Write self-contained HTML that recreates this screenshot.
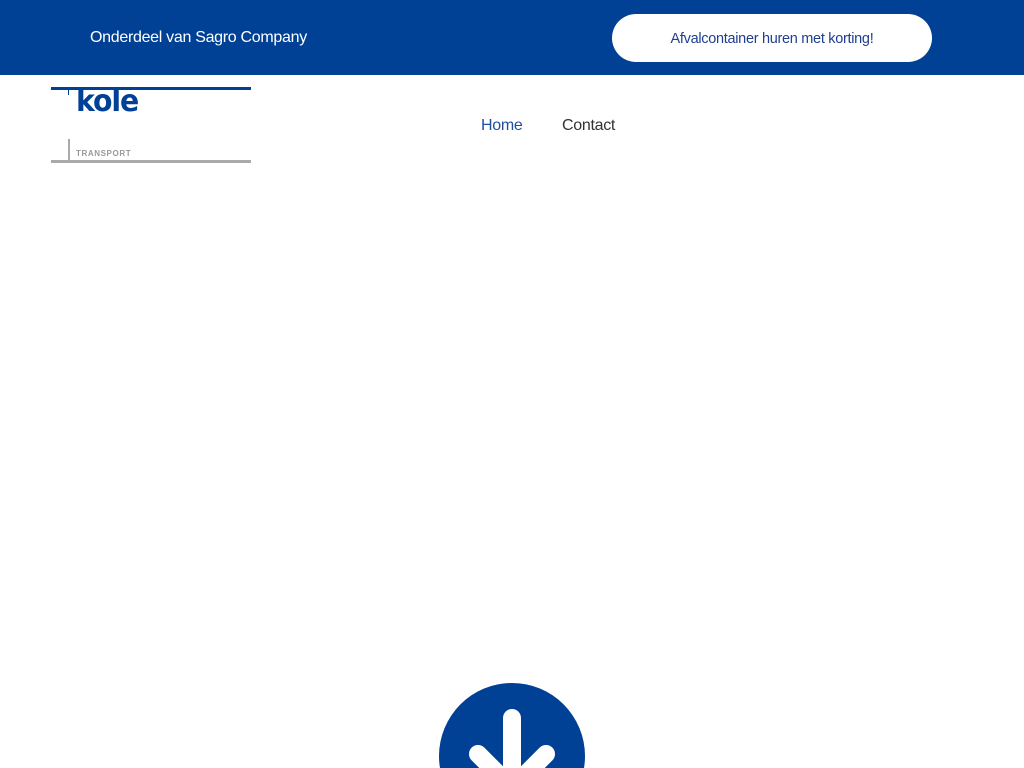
<!DOCTYPE html>
<html><head><meta charset="utf-8"><style>
*{margin:0;padding:0;box-sizing:border-box}
html,body{width:1024px;height:768px;overflow:hidden}
body{background:#fff;font-family:"Liberation Sans",sans-serif;position:relative}
.top{position:absolute;left:0;top:0;width:1024px;height:75px;background:#004196}
.top .t{position:absolute;left:90px;top:29px;color:#fff;font-size:16px;letter-spacing:-0.3px}
.btn{position:absolute;left:612px;top:14px;width:320px;height:48px;border-radius:24px;background:#fff;color:#1f3f8f;font-size:14.5px;text-align:center;line-height:50px;letter-spacing:-0.3px}
.nav{position:absolute;top:117px;font-size:16px;letter-spacing:-0.3px}
</style></head><body>
<div class="top"><div class="t">Onderdeel van Sagro Company</div><div class="btn">Afvalcontainer huren met korting!</div></div>
<div style="position:absolute;left:51px;top:87px;width:200px;height:3px;background:#004196"></div>
<div style="position:absolute;left:68px;top:90px;width:1px;height:5px;background:#004196"></div>
<div style="position:absolute;left:76px;top:84px;font-family:'DejaVu Sans Condensed','Liberation Sans',sans-serif;font-weight:bold;font-size:30px;color:#004196;letter-spacing:-1px;transform:scaleX(1.05);transform-origin:left">kole</div>
<div style="position:absolute;left:68px;top:139px;width:2px;height:21px;background:#aaa"></div>
<div style="position:absolute;left:76px;top:149px;font-size:8px;font-weight:bold;color:#999;letter-spacing:0.6px">TRANSPORT</div>
<div style="position:absolute;left:51px;top:160px;width:200px;height:3px;background:#aaa"></div>
<div class="nav" style="left:481px;color:#1f4fa0">Home</div>
<div class="nav" style="left:562px;color:#333">Contact</div>
<svg style="position:absolute;left:0;top:0;display:block" width="1024" height="768">
<circle cx="512" cy="756" r="73" fill="#004196"/>
<g stroke="#fff" stroke-width="18" stroke-linecap="round" fill="none">
<line x1="512" y1="718" x2="512" y2="800"/>
<line x1="478" y1="754" x2="512" y2="788"/>
<line x1="546" y1="754" x2="512" y2="788"/>
</g></svg>
</body></html>
